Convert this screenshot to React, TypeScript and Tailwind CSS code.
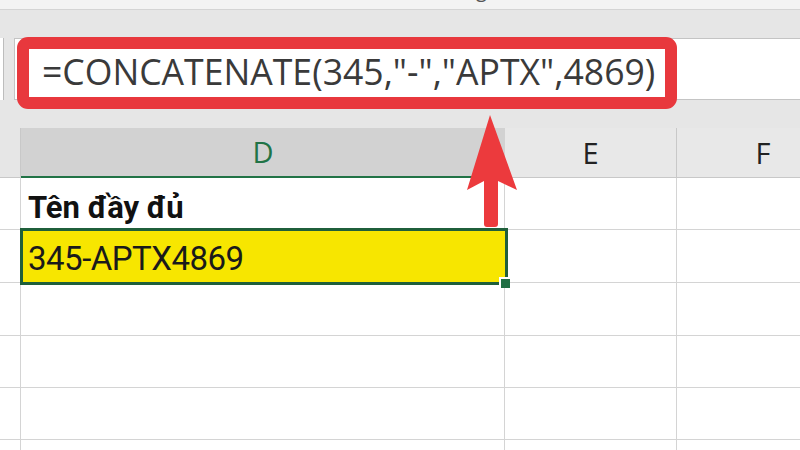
export default function App() {
  return (
    <div className="relative w-[800px] h-[450px] overflow-hidden bg-white font-['Open_Sans',sans-serif]">
      {/* title bar remnant */}
      <div className="h-[10px] overflow-hidden bg-[#f3f3f3] border-b border-[#d4d4d4] pl-[476px]">
        <span className="block -mt-[22px] text-[20px] leading-[24px] text-[#555]">g</span>
      </div>

      {/* formula bar area */}
      <div className="h-[118px] bg-[#e6e6e6] pt-[28px]">
        <div className="flex h-[62px]">
          <div className="w-[4px] bg-white border-r border-[#bdbdbd]" />
          <div className="w-[10px]" />
          <div className="flex-1 bg-white border-y border-l border-[#c4c4c4] pl-[2px]">
            <div className="-mt-[2px] w-[660px] h-[72px] border-[12px] border-[#e8383d] rounded-[11px] bg-white flex items-center pl-[13px] pb-[2px]">
              <span className="text-[35.6px] leading-none text-[#3a3a3a] whitespace-nowrap">
                =CONCATENATE(345,"-","APTX",4869)
              </span>
            </div>
          </div>
        </div>
      </div>

      {/* sheet grid */}
      <div className="grid grid-cols-[21px_484px_172px_172px] w-[849px]">
        {/* column headers */}
        <div className="h-[50px] bg-[#e6e6e6] border-r border-b border-[#c8c8c8]" />
        <div className="h-[50px] bg-[#d2d2d2] border-b-2 border-[#217346] flex items-center justify-center text-[29px] text-[#217346]">
          D
        </div>
        <div className="h-[50px] bg-[#e8e8e8] border-r border-b border-[#c8c8c8] flex items-center justify-center text-[29px] text-[#222]">
          E
        </div>
        <div className="h-[50px] bg-[#e8e8e8] border-b border-[#c8c8c8] flex items-center justify-center text-[29px] text-[#222]">
          F
        </div>

        {/* row 1 */}
        <div className="h-[52px] border-r border-b border-[#d4d4d4]" />
        <div className="h-[52px] border-r border-b border-[#d4d4d4] flex items-end pl-[7px] pb-[6px]">
          <span className="font-['Roboto',sans-serif] font-bold text-[31px] leading-none text-[#111]">Tên đầy đủ</span>
        </div>
        <div className="h-[52px] border-r border-b border-[#d4d4d4]" />
        <div className="h-[52px] border-b border-[#d4d4d4]" />

        {/* row 2 - selected cell */}
        <div className="h-[53px] border-r border-b border-[#d4d4d4]" />
        <div className="relative h-[53px] bg-[#f7e600] flex items-end pl-[7px] pb-[8px]">
          <span className="font-['Roboto',sans-serif] text-[33px] leading-none text-[#1a1a1a] tracking-[-0.5px]">345-APTX4869</span>
          <div className="absolute -left-[1px] -top-[2px] -right-[3px] -bottom-[2px] border-[3px] border-[#1f5f3b]" />
          <div className="absolute -right-[5px] -bottom-[5px] w-[11px] h-[11px] bg-[#1f6e43] border-l-2 border-t-2 border-white" />
        </div>
        <div className="h-[53px] border-r border-b border-[#d4d4d4]" />
        <div className="h-[53px] border-b border-[#d4d4d4]" />

        {[53, 52, 52, 52].map((h, i) => (
          <div key={i} className="contents">
            <div className={`border-r border-b border-[#d4d4d4] ${h === 53 ? 'h-[53px]' : 'h-[52px]'}`} />
            <div className={`border-r border-b border-[#d4d4d4] ${h === 53 ? 'h-[53px]' : 'h-[52px]'}`} />
            <div className={`border-r border-b border-[#d4d4d4] ${h === 53 ? 'h-[53px]' : 'h-[52px]'}`} />
            <div className={`border-b border-[#d4d4d4] ${h === 53 ? 'h-[53px]' : 'h-[52px]'}`} />
          </div>
        ))}
      </div>

      {/* annotation arrow */}
      <svg
        className="absolute left-[460px] top-[110px]"
        width="64"
        height="122"
        viewBox="0 0 64 122"
      >
        <path
          d="M30 5 L57 80 L38 71 L38 114 Q38 117 35 117 L27 117 Q24 117 24 114 L24 71 L7 80 Z"
          fill="#ec3a3d"
        />
      </svg>
    </div>
  );
}
